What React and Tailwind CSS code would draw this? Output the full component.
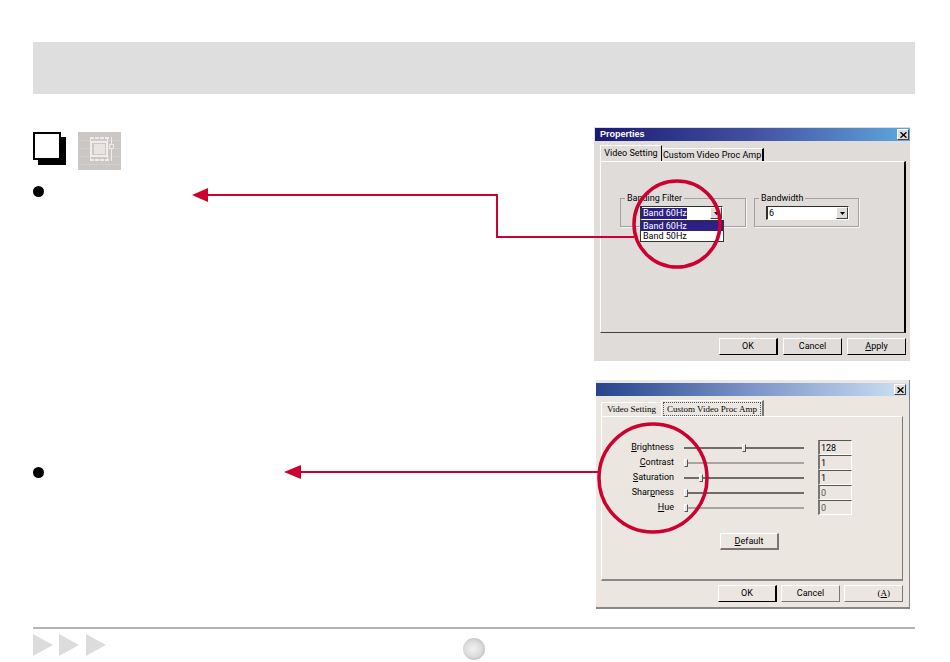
const buttonBase =
  "flex h-[17px] w-[59px] items-center justify-center border border-t-white border-l-white text-[9px] leading-none text-black";

const sliders = [
  { id: "brightness", before: "", letter: "B", rest: "rightness", value: 128, pos: 128, max: 255 },
  { id: "contrast", before: "", letter: "C", rest: "ontrast", value: 1, pos: 1, max: 255, soft: true },
  { id: "saturation", before: "", letter: "S", rest: "aturation", value: 1, pos: 1, max: 8 },
  { id: "sharpness", before: "Shar", letter: "p", rest: "ness", value: 0, pos: 0, max: 255 },
  { id: "hue", before: "", letter: "H", rest: "ue", value: 0, pos: 0, max: 255, soft: true },
];

function CloseButton() {
  return (
    <button
      aria-label="Close"
      className="flex h-[11px] w-3 items-center justify-center border border-t-white border-l-white border-r-[#404040] border-b-[#404040] bg-[#e0dcda]"
    >
      <svg width="7" height="6" viewBox="0 0 7 6" stroke="#000" strokeWidth="1.4">
        <path d="M0.5 0.3 6.5 5.7M6.5 0.3 0.5 5.7" />
      </svg>
    </button>
  );
}

function SelectBox({ id, value, selected }) {
  return (
    <div className="relative flex h-[14px] w-[83px] items-center border border-t-[#303030] border-l-2 border-l-[#303030] border-r-white border-b-white bg-white">
      <select
        id={id}
        defaultValue={value}
        className={
          selected
            ? "h-[11px] w-[45px] appearance-none bg-[#2c1f85] pl-px text-[9px] leading-[11px] text-white"
            : "h-[11px] w-[66px] appearance-none pl-px text-[9px] leading-[11px] text-black"
        }
      >
        <option>{value}</option>
      </select>
      <span className="pointer-events-none absolute top-0 right-0 flex h-3 w-3 items-center justify-center border border-t-white border-l-white border-r-[#404040] border-b-[#404040] bg-[#e0dcda]">
        <svg width="5" height="3" viewBox="0 0 5 3">
          <path d="M0 0h5L2.5 3z" />
        </svg>
      </span>
    </div>
  );
}

function PropertiesDialog() {
  return (
    <section aria-label="Properties" className="bg-[#e0dcda] pt-px pb-[6px] pl-px">
      <header className="flex h-[13px] items-center justify-between bg-linear-to-r from-[#1c1873] via-[#4350a0] to-[#5fa8dc] pr-px pl-[5px]">
        <h2 className="font-['Liberation_Sans',sans-serif] text-[9px] leading-none font-bold text-white">Properties</h2>
        <CloseButton />
      </header>
      <div className="pt-1 pr-1 pl-[5px]">
        <div role="tablist" className="flex items-end">
          <button
            role="tab"
            aria-selected="true"
            className="h-4 w-[62px] border-t border-r border-l border-t-white border-r-black border-l-white text-[9px] leading-none whitespace-nowrap"
          >
            Video Setting
          </button>
          <button
            role="tab"
            aria-selected="false"
            className="h-[13px] border-t border-r-2 border-t-white border-r-black px-px text-[9px] leading-none whitespace-nowrap"
          >
            Custom Video Proc Amp
          </button>
        </div>
        <div role="tabpanel" className="border border-t-white border-r-2 border-r-black border-b-[#404040] border-l-white pt-[31px] pb-[105px] pl-[19px]">
          <div className="flex items-start gap-2">
            <fieldset className="w-[126px] border border-[#a5a19f] pt-[3px] pb-[6px] pl-[19px] shadow-[1px_1px_0_#f8f6f5]">
              <legend className="-ml-[15px] px-[2px] text-[9px] leading-[10px]">
                <label htmlFor="banding">Banding Filter</label>
              </legend>
              <div className="relative">
                <SelectBox id="banding" value="Band 60Hz" selected />
                <ul role="listbox" aria-label="Banding Filter" className="absolute top-[14px] left-0 w-[84px] border border-[#333] bg-white text-[9px] leading-[10px]">
                  <li role="option" aria-selected="true" className="bg-[#2c1f85] pl-[2px] text-white">Band 60Hz</li>
                  <li role="option" aria-selected="false" className="pl-[2px]">Band 50Hz</li>
                </ul>
              </div>
            </fieldset>
            <fieldset className="w-[105px] border border-[#a5a19f] pt-[3px] pb-[6px] pl-[11px] shadow-[1px_1px_0_#f8f6f5]">
              <legend className="-ml-[7px] px-[2px] text-[9px] leading-[10px]">
                <label htmlFor="bandwidth">Bandwidth</label>
              </legend>
              <SelectBox id="bandwidth" value="6" />
            </fieldset>
          </div>
        </div>
        <div className="flex justify-end gap-[5px] pt-[5px]">
          <button className={`${buttonBase} border-t-black border-l-black border-r-2 border-r-black border-b-black`}>OK</button>
          <button className={`${buttonBase} border-r-black border-b-black`}>Cancel</button>
          <button className={`${buttonBase} border-r-black border-b-black`}>
            <u>A</u>pply
          </button>
        </div>
      </div>
    </section>
  );
}

function ProcAmpDialog() {
  return (
    <section aria-label="Custom Video Proc Amp" className="ml-[2px] border-r border-b-2 border-[#8b8783] bg-[#ebe7e0] pt-[3px] pb-[5px]">
      <header className="flex h-[13px] items-center justify-end bg-linear-to-r from-[#27438c] via-[#7d95c8] to-[#cfe2f5] pr-[3px]">
        <CloseButton />
      </header>
      <div className="pt-1 pr-[6px] pl-[5px]">
        <div role="tablist" className="flex items-end font-['Liberation_Serif',serif]">
          <button
            role="tab"
            aria-selected="false"
            className="h-[14px] w-[60px] border-t border-l border-white text-[9px] leading-none whitespace-nowrap"
          >
            Video Setting
          </button>
          <button
            role="tab"
            aria-selected="true"
            className="h-4 w-[103px] border-t border-r-2 border-l border-t-white border-r-[#777] border-l-white px-px text-[9px] leading-[10px] whitespace-nowrap"
          >
            <span className="block border border-dotted border-[#555] py-px">Custom Video Proc Amp</span>
          </button>
        </div>
        <div role="tabpanel" className="border border-t-white border-r-[#777] border-b-2 border-b-[#8b8783] border-l-white pt-[23px] pb-[29px]">
          <div className="flex flex-col">
            {sliders.map((s) => (
              <div key={s.id} className="grid h-[15px] grid-cols-[72px_120px_34px] items-center">
                <label htmlFor={s.id} className="text-right text-[9px] leading-none">
                  {s.before}
                  <u>{s.letter}</u>
                  {s.rest}
                </label>
                <input
                  id={s.id}
                  type="range"
                  min="0"
                  max={s.max}
                  defaultValue={s.pos}
                  className={`ml-[10px] h-3 w-[120px] appearance-none bg-transparent [&::-webkit-slider-runnable-track]:h-[2px] [&::-webkit-slider-thumb]:-mt-[3px] [&::-webkit-slider-thumb]:h-2 [&::-webkit-slider-thumb]:w-1 [&::-webkit-slider-thumb]:appearance-none [&::-webkit-slider-thumb]:border [&::-webkit-slider-thumb]:border-t-white [&::-webkit-slider-thumb]:border-r-[#555] [&::-webkit-slider-thumb]:border-b-[#555] [&::-webkit-slider-thumb]:border-l-white [&::-webkit-slider-thumb]:bg-[#ebe7e0] ${
                    s.soft
                      ? "[&::-webkit-slider-runnable-track]:bg-[#a8a5a1]"
                      : "[&::-webkit-slider-runnable-track]:bg-[#6e6b68]"
                  }`}
                />
                <input
                  type="text"
                  aria-label={s.id}
                  defaultValue={s.value}
                  className={`ml-6 h-[15px] w-[34px] border border-t-[#555] border-r-white border-b-white border-l-2 border-l-[#777] pl-px text-[9px] leading-none ${
                    s.value === 0 ? "text-[#555]" : "text-black"
                  }`}
                />
              </div>
            ))}
          </div>
          <button className={`${buttonBase} mt-[18px] ml-[118px] border-r-2 border-b-2 border-r-[#777] border-b-[#777]`}>
            <u>D</u>efault
          </button>
        </div>
        <div className="flex justify-end gap-1 pt-1">
          <button className={`${buttonBase} border-t-black border-l-black border-r-2 border-r-black border-b-black`}>OK</button>
          <button className={`${buttonBase} border-r-[#777] border-b-[#777]`}>Cancel</button>
          <button className={`${buttonBase} justify-end border-r-[#777] border-b-[#777] pr-3 font-['Liberation_Serif',serif]`}>
            (<u>A</u>)
          </button>
        </div>
      </div>
    </section>
  );
}

function Bullet() {
  return <span className="block size-[11px] rounded-full bg-black" />;
}

export default function App() {
  return (
    <div className="bg-white pt-[42px] pr-[35px] pl-[33px] font-[Roboto,'Liberation_Sans',sans-serif] text-black">
      <header className="h-[52px] bg-[#dedede]" />

      <main className="flex flex-col gap-[19px] pt-[33px] pr-[5px]">
        <div className="flex justify-between">
          <div className="pt-[5px]">
            <div className="flex gap-[17px]">
              <span className="size-7 border-2 border-black bg-white shadow-[5px_5px_0_#000]" />
              <svg width="43" height="38" viewBox="0 0 43 38" fill="none">
                <path fill="#cbc7c5" d="M0 0h43v38H0z" />
                <path stroke="#d3cfcd" d="M0 8.5h43M0 16.5h43M0 24.5h43M0 32.5h43" />
                <path stroke="#f0eceb" strokeWidth="2" d="M13 10h16v14H13z" />
                <path fill="#e9e4e3" d="M16 12h11v10H16z" />
                <path stroke="#f0eceb" strokeWidth="2" strokeDasharray="4 1" d="M12 6h19M12 28h19" />
                <path stroke="#f0eceb" d="M12.500 6v22M29.500 6v22M33.500 5v24" />
                <path fill="#cbc7c5" stroke="#f0eceb" d="M31.500 12.500h4v4h-4z" />
              </svg>
            </div>
            <div className="pt-4">
              <Bullet />
            </div>
          </div>
          <div className="relative w-[316px]">
            <PropertiesDialog />
            <svg className="pointer-events-none absolute top-0 right-0" width="720" height="150" viewBox="190 127 720 150" fill="none" stroke="#cd002f">
              <path strokeWidth="2" d="M205 195H497V237H634" />
              <path fill="#cd002f" stroke="none" d="M192 195l16-7v14z" />
              <circle cx="677" cy="224" r="43" strokeWidth="3.500" />
            </svg>
          </div>
        </div>

        <div className="flex justify-between">
          <div className="pt-[87px]">
            <Bullet />
          </div>
          <div className="relative w-[316px]">
            <ProcAmpDialog />
            <svg className="pointer-events-none absolute top-0 right-0" width="720" height="170" viewBox="190 380 720 170" fill="none" stroke="#cd002f">
              <path strokeWidth="2" d="M298 472H599" />
              <path fill="#cd002f" stroke="none" d="M284 472l17-7v14z" />
              <circle cx="653" cy="478" r="54" strokeWidth="3.500" />
            </svg>
          </div>
        </div>
      </main>

      <footer className="mt-[18px] grid grid-cols-3 items-start border-t-2 border-[#b5b5b5] pt-[5px]">
        <svg width="74" height="23" viewBox="0 0 74 23" fill="#dcdcdc">
          <path d="M0 0v22l20-11zM26 0v22l20-11zM53 0v22l20-11z" />
        </svg>
        <span className="mt-1 size-[22px] justify-self-center rounded-full bg-radial-[at_45%_50%] from-[#f2f2f2] via-[#dcdcdc] to-[#a8a8a8]" />
      </footer>
    </div>
  );
}
